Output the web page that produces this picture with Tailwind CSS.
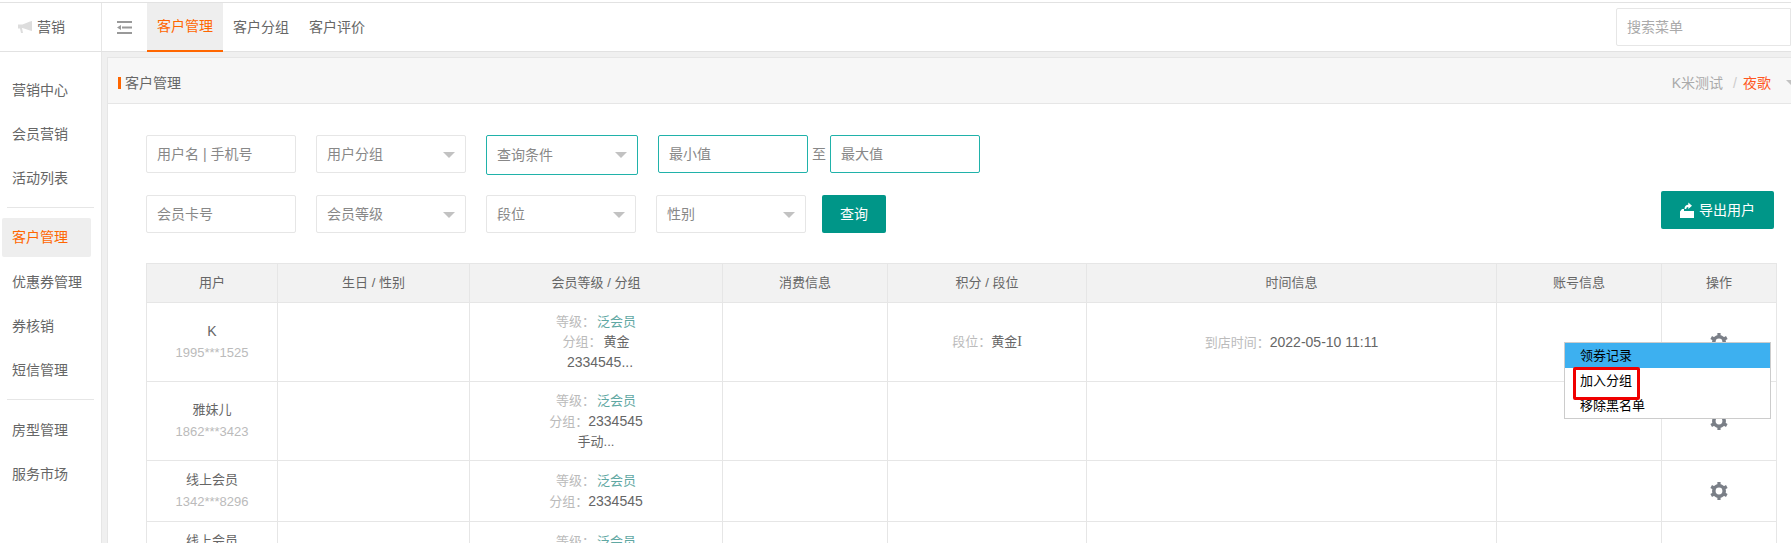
<!DOCTYPE html>
<html lang="zh-CN">
<head>
    <meta charset="UTF-8">
    <title>客户管理</title>
    <script src="https://cdn.jsdelivr.net/npm/@tailwindcss/browser@4"></script>
</head>
<body class="bg-white font-['Liberation_Sans','Noto_Sans_CJK_SC',sans-serif] text-[13px] text-[#666]">
<div class="relative h-[543px] w-[1791px] overflow-hidden">
    <!-- top bar -->
    <div class="mt-[2px] flex h-[50px] border-y border-[#e2e2e2]">
        <div class="flex w-[102px] items-center gap-[5px] border-r border-[#e6e6e6] pl-[18px] text-[14px]">
            <svg class="h-[13px] w-[14px]" viewBox="0 0 14 13" fill="#ddd"><path d="M0 3.500h4.500L12 .5l2-.5v10l-2-.5-7.500-2.500H4l1 5H3L2 7.500H0z"/></svg>
            <span>营销</span>
        </div>
        <div class="flex w-[45px] items-center pl-[15px]">
            <svg class="h-[13px] w-[15px]" viewBox="0 0 15 13" fill="#999"><path d="M0 0h15v2H0zM5 5.500h10v2H5zM0 11h15v2H0zM4 4v5L0 6.500z"/></svg>
        </div>
        <div class="flex h-[49px] w-[76px] items-center justify-center border-b-[2px] border-[#ff6600] bg-[#eee] text-[14px] text-[#ff6600]">客户管理</div>
        <div class="flex w-[76px] items-center justify-center text-[14px]">客户分组</div>
        <div class="flex w-[76px] items-center justify-center text-[14px]">客户评价</div>
        <div class="ml-auto mt-[5px] flex h-[38px] w-[175px] items-center rounded-l-[2px] border border-[#e6e6e6] pl-[10px] text-[14px] text-[#aaa]">搜索菜单</div>
    </div>

    <div class="flex h-[491px]">
        <!-- side menu -->
        <div class="w-[102px] shrink-0 border-r border-[#e6e6e6] pt-[16px] text-[14px]">
            <div class="flex h-[44px] items-center pl-[12px]">营销中心</div>
            <div class="flex h-[44px] items-center pl-[12px]">会员营销</div>
            <div class="flex h-[44px] items-center pl-[12px]">活动列表</div>
            <div class="mx-[7px] mt-[7px] border-t border-[#e6e6e6]"></div>
            <div class="ml-[2px] mr-[10px] mt-[10px] mb-[3px] flex h-[39px] items-center rounded-[2px] bg-[#eee] pl-[10px] text-[#ff6600]">客户管理</div>
            <div class="flex h-[44px] items-center pl-[12px]">优惠券管理</div>
            <div class="flex h-[44px] items-center pl-[12px]">券核销</div>
            <div class="flex h-[44px] items-center pl-[12px]">短信管理</div>
            <div class="mx-[7px] mb-[8px] mt-[7px] border-t border-[#e6e6e6]"></div>
            <div class="flex h-[44px] items-center pl-[12px]">房型管理</div>
            <div class="flex h-[44px] items-center pl-[12px]">服务市场</div>
        </div>

        <!-- content -->
        <div class="flex-1 bg-[#f0f0f0] pl-[5px] pt-[5px]">
            <div class="h-full border-l border-t border-[#e6e6e6] bg-white">
                <div class="flex h-[46px] items-center border-b border-[#e6e6e6] bg-[#f7f7f7] pl-[10px] pt-[5px]">
                    <span class="mr-[4px] h-[12px] w-[3px] bg-[#ff6600]"></span>
                    <span class="text-[14px]">客户管理</span>
                    <div class="ml-auto flex items-center text-[14px]">
                        <span class="text-[#aaa]">K米测试</span>
                        <span class="ml-[10px] text-[#ccc]">/</span>
                        <span class="ml-[6px] text-[#ff5722]">夜歌</span>
                        <span class="ml-[15px] mr-[-6px] border-x-[6px] border-t-[6px] border-x-transparent border-t-[#c2c2c2]"></span>
                    </div>
                </div>

                <div class="relative pl-[38px] pr-[15px] pt-[31px] text-[14px]">
                    <div class="flex items-start">
                        <div class="flex h-[38px] w-[150px] items-center rounded-[2px] border border-[#e6e6e6] pl-[10px] text-[#888]">用户名 | 手机号</div>
                        <div class="relative ml-[20px] flex h-[38px] w-[150px] items-center rounded-[2px] border border-[#e6e6e6] pl-[10px] text-[#888]">用户分组<span class="absolute right-[10px] top-[16px] border-x-[6px] border-t-[6px] border-x-transparent border-t-[#c2c2c2]"></span></div>
                        <div class="relative ml-[20px] flex h-[40px] w-[152px] items-center rounded-[2px] border border-[#20b2aa] pl-[10px] text-[#888]">查询条件<span class="absolute right-[10px] top-[16px] border-x-[6px] border-t-[6px] border-x-transparent border-t-[#c2c2c2]"></span></div>
                        <div class="ml-[20px] flex h-[38px] w-[150px] items-center rounded-[2px] border border-[#20b2aa] pl-[10px] text-[#888]">最小值</div>
                        <div class="flex h-[38px] w-[22px] items-center justify-center text-[#888]">至</div>
                        <div class="flex h-[38px] w-[150px] items-center rounded-[2px] border border-[#20b2aa] pl-[10px] text-[#888]">最大值</div>
                    </div>
                    <div class="mt-[20px] flex items-start">
                        <div class="flex h-[38px] w-[150px] items-center rounded-[2px] border border-[#e6e6e6] pl-[10px] text-[#888]">会员卡号</div>
                        <div class="relative ml-[20px] flex h-[38px] w-[150px] items-center rounded-[2px] border border-[#e6e6e6] pl-[10px] text-[#888]">会员等级<span class="absolute right-[10px] top-[16px] border-x-[6px] border-t-[6px] border-x-transparent border-t-[#c2c2c2]"></span></div>
                        <div class="relative ml-[20px] flex h-[38px] w-[150px] items-center rounded-[2px] border border-[#e6e6e6] pl-[10px] text-[#888]">段位<span class="absolute right-[10px] top-[16px] border-x-[6px] border-t-[6px] border-x-transparent border-t-[#c2c2c2]"></span></div>
                        <div class="relative ml-[20px] flex h-[38px] w-[150px] items-center rounded-[2px] border border-[#e6e6e6] pl-[10px] text-[#888]">性别<span class="absolute right-[10px] top-[16px] border-x-[6px] border-t-[6px] border-x-transparent border-t-[#c2c2c2]"></span></div>
                        <button class="ml-[16px] h-[38px] w-[64px] rounded-[2px] bg-[#009688] text-white">查询</button>
                        <button class="ml-auto mr-[3px] mt-[-4px] flex h-[38px] w-[113px] items-center justify-center gap-[5px] rounded-[2px] bg-[#009688] text-[14px] text-white">
                            <svg class="h-[16px] w-[14px]" viewBox="0 0 14 16" fill="#fff"><path d="M0 16V9.500L2 7h2v2h10v7zM4.500 7c0-3 1.800-4.300 3.800-4.300V.5L12 3.800 8.300 7V5C6.800 5 6.300 5.800 6.300 7z"/></svg>
                            <span>导出用户</span>
                        </button>
                    </div>

                    <table class="mt-[30px] w-[1630px] table-fixed border-collapse text-center text-[13px]">
                        <colgroup>
                            <col class="w-[131px]"><col class="w-[192px]"><col class="w-[253px]"><col class="w-[165px]"><col class="w-[199px]"><col class="w-[410px]"><col class="w-[165px]"><col class="w-[115px]">
                        </colgroup>
                        <thead class="bg-[#f2f2f2]">
                            <tr class="h-[39px]">
                                <th class="border border-[#e6e6e6] font-normal">用户</th>
                                <th class="border border-[#e6e6e6] font-normal">生日 / 性别</th>
                                <th class="border border-[#e6e6e6] font-normal">会员等级 / 分组</th>
                                <th class="border border-[#e6e6e6] font-normal">消费信息</th>
                                <th class="border border-[#e6e6e6] font-normal">积分 / 段位</th>
                                <th class="border border-[#e6e6e6] font-normal">时间信息</th>
                                <th class="border border-[#e6e6e6] font-normal">账号信息</th>
                                <th class="border border-[#e6e6e6] font-normal">操作</th>
                            </tr>
                        </thead>
                        <tbody class="leading-[20px]">
                            <tr class="h-[79px]">
                                <td class="border border-[#e6e6e6]"><div class="text-[14px] leading-[22px]">K</div><div class="leading-[22px] text-[#bbb]">1995***1525</div></td>
                                <td class="border border-[#e6e6e6]"></td>
                                <td class="border border-[#e6e6e6]"><div><span class="text-[#bbb]">等级：</span><span class="ml-[2px] text-[#5fa8a3]">泛会员</span></div><div><span class="text-[#bbb]">分组：</span><span class="ml-[2px]">黄金</span></div><div class="pl-[8px] text-[14px]">2334545...</div></td>
                                <td class="border border-[#e6e6e6]"></td>
                                <td class="border border-[#e6e6e6]"><span class="text-[#bbb]">段位：</span>黄金<span class="font-['Liberation_Serif'] text-[14px]">I</span></td>
                                <td class="border border-[#e6e6e6]"><span class="text-[#bbb]">到店时间：</span><span class="text-[14px]">2022-05-10 11:11</span></td>
                                <td class="border border-[#e6e6e6]"></td>
                                <td class="border border-[#e6e6e6]"><svg class="mx-auto h-[18px] w-[18px]" viewBox="0 0 18 18"><circle cx="9" cy="9" r="5.200" fill="none" stroke="#7a7f87" stroke-width="3.600"/><path stroke="#7a7f87" stroke-width="3.200" d="M9 0v3M9 15v3M1.200 4.500l2.600 1.500M14.200 12l2.600 1.500M1.200 13.500 3.800 12M14.200 6l2.600-1.500"/></svg></td>
                            </tr>
                            <tr class="h-[79px]">
                                <td class="border border-[#e6e6e6]"><div class="leading-[22px]">雅妹儿</div><div class="leading-[22px] text-[#bbb]">1862***3423</div></td>
                                <td class="border border-[#e6e6e6]"></td>
                                <td class="border border-[#e6e6e6]"><div><span class="text-[#bbb]">等级：</span><span class="ml-[2px] text-[#5fa8a3]">泛会员</span></div><div><span class="text-[#bbb]">分组：</span><span class="text-[14px]">2334545</span></div><div>手动...</div></td>
                                <td class="border border-[#e6e6e6]"></td>
                                <td class="border border-[#e6e6e6]"></td>
                                <td class="border border-[#e6e6e6]"></td>
                                <td class="border border-[#e6e6e6]"></td>
                                <td class="border border-[#e6e6e6]"><svg class="mx-auto h-[18px] w-[18px]" viewBox="0 0 18 18"><circle cx="9" cy="9" r="5.200" fill="none" stroke="#7a7f87" stroke-width="3.600"/><path stroke="#7a7f87" stroke-width="3.200" d="M9 0v3M9 15v3M1.200 4.500l2.600 1.500M14.200 12l2.600 1.500M1.200 13.500 3.800 12M14.200 6l2.600-1.500"/></svg></td>
                            </tr>
                            <tr class="h-[61px]">
                                <td class="border border-[#e6e6e6]"><div class="leading-[22px]">线上会员</div><div class="leading-[22px] text-[#bbb]">1342***8296</div></td>
                                <td class="border border-[#e6e6e6]"></td>
                                <td class="border border-[#e6e6e6]"><div><span class="text-[#bbb]">等级：</span><span class="ml-[2px] text-[#5fa8a3]">泛会员</span></div><div><span class="text-[#bbb]">分组：</span><span class="text-[14px]">2334545</span></div></td>
                                <td class="border border-[#e6e6e6]"></td>
                                <td class="border border-[#e6e6e6]"></td>
                                <td class="border border-[#e6e6e6]"></td>
                                <td class="border border-[#e6e6e6]"></td>
                                <td class="border border-[#e6e6e6]"><svg class="mx-auto h-[18px] w-[18px]" viewBox="0 0 18 18"><circle cx="9" cy="9" r="5.200" fill="none" stroke="#7a7f87" stroke-width="3.600"/><path stroke="#7a7f87" stroke-width="3.200" d="M9 0v3M9 15v3M1.200 4.500l2.600 1.500M14.200 12l2.600 1.500M1.200 13.500 3.800 12M14.200 6l2.600-1.500"/></svg></td>
                            </tr>
                            <tr class="h-[61px]">
                                <td class="border border-[#e6e6e6]"><div class="leading-[22px]">线上会员</div><div class="leading-[22px] text-[#bbb]">1342***8296</div></td>
                                <td class="border border-[#e6e6e6]"></td>
                                <td class="border border-[#e6e6e6]"><div><span class="text-[#bbb]">等级：</span><span class="ml-[2px] text-[#5fa8a3]">泛会员</span></div><div><span class="text-[#bbb]">分组：</span><span class="text-[14px]">2334545</span></div></td>
                                <td class="border border-[#e6e6e6]"></td>
                                <td class="border border-[#e6e6e6]"></td>
                                <td class="border border-[#e6e6e6]"></td>
                                <td class="border border-[#e6e6e6]"></td>
                                <td class="border border-[#e6e6e6]"><svg class="mx-auto h-[18px] w-[18px]" viewBox="0 0 18 18"><circle cx="9" cy="9" r="5.200" fill="none" stroke="#7a7f87" stroke-width="3.600"/><path stroke="#7a7f87" stroke-width="3.200" d="M9 0v3M9 15v3M1.200 4.500l2.600 1.500M14.200 12l2.600 1.500M1.200 13.500 3.800 12M14.200 6l2.600-1.500"/></svg></td>
                            </tr>
                        </tbody>
                    </table>
                </div>
            </div>
        </div>
    </div>

    <!-- context menu over the table -->
    <div class="absolute left-[1564px] top-[342px] h-[77px] w-[207px] border border-[#ccc] bg-white text-[13px] leading-[26px] text-black">
        <div class="h-[25px] bg-[#3db0f0] pl-[15px]">领券记录</div>
        <div class="h-[25px] pl-[15px]">加入分组</div>
        <div class="h-[25px] pl-[15px]">移除黑名单</div>
    </div>
    <div class="absolute left-[1573px] top-[367px] h-[33px] w-[67px] rounded-[2px] border-[3px] border-[#f00000]"></div>
</div>
</body>
</html>
